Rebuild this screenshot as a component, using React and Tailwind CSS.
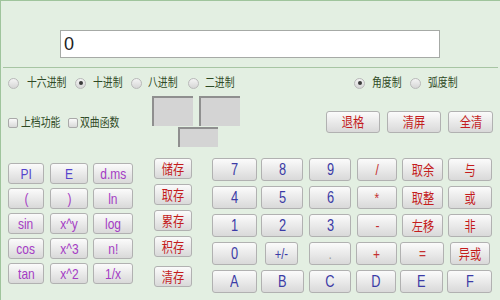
import React from 'react';

// Scientific calculator panel (Chinese UI)
const FONT = { fontFamily: '"Liberation Sans", "Noto Sans CJK SC", sans-serif' };

const Radio = ({ checked, className = '' }) => (
  <span
    className={`flex items-center justify-center w-[11px] h-[11px] rounded-full border border-[#b9b9b9] bg-linear-to-b from-[#f4f4f4] to-[#d6d6d6] shrink-0 ${className}`}
  >
    {checked && <span className="w-[4px] h-[4px] rounded-full bg-[#3a3a3a]" />}
  </span>
);

const Check = ({ className = '' }) => (
  <span
    className={`w-[10px] h-[10px] rounded-[2px] border border-[#a9a9a9] bg-linear-to-b from-[#fafafa] to-[#d9d9d9] shrink-0 ${className}`}
  />
);

// labels are drawn condensed, like the original narrow font
const Label = ({ children, className = '' }) => (
  <span className={`block text-[12px] leading-none text-[#2f4a25] whitespace-nowrap ${className}`}>
    <span className="inline-block origin-left scale-x-[0.82]">{children}</span>
  </span>
);

const Btn = ({ children, className = '' }) => (
  <div
    className={`flex items-center justify-center rounded-[3px] border border-[#b1b1b1] bg-linear-to-b from-[#fbfbfb] to-[#d9d9d9] leading-none shrink-0 ${className}`}
  >
    <span className="inline-block scale-x-[0.8]">{children}</span>
  </div>
);

const BLUE = 'text-[#3b3ba6] text-[16px]';
const RED = 'text-[#c41c1c] text-[14px]';
const OP = 'text-[#c43030] text-[15px]';
const PUR = 'text-[#a43cc4] text-[15px]';
const VIO = 'text-[#5544cc] text-[15px]';

const funcRows = [
  [['PI', VIO], ['E', VIO], ['d.ms', PUR]],
  [['(', PUR], [')', PUR], ['ln', PUR]],
  [['sin', PUR], ['x^y', PUR], ['log', PUR]],
  [['cos', PUR], ['x^3', PUR], ['n!', PUR]],
  [['tan', PUR], ['x^2', PUR], ['1/x', PUR]],
];
const funcCols = ['w-[36px]', 'ml-[6px] w-[38px]', 'ml-[5px] w-[40px]'];

const memRows = [
  ['储存', 'mt-0'],
  ['取存', 'mt-[5px]'],
  ['累存', 'mt-[5px]'],
  ['积存', 'mt-[5px]'],
  ['清存', 'mt-[9px]'],
];

const mainRows = [
  [
    ['7', BLUE, 'w-[45px]'],
    ['8', BLUE, 'ml-[4px] w-[42px]'],
    ['9', BLUE, 'ml-[6px] w-[42px]'],
    ['/', OP, 'ml-[6px] w-[40px]'],
    ['取余', RED, 'ml-[5px] w-[41px]'],
    ['与', RED, 'ml-[5px] w-[44px]'],
  ],
  [
    ['4', BLUE, 'w-[45px]'],
    ['5', BLUE, 'ml-[4px] w-[42px]'],
    ['6', BLUE, 'ml-[6px] w-[42px]'],
    ['*', OP, 'ml-[6px] w-[40px]'],
    ['取整', RED, 'ml-[5px] w-[41px]'],
    ['或', RED, 'ml-[5px] w-[44px]'],
  ],
  [
    ['1', BLUE, 'w-[45px]'],
    ['2', BLUE, 'ml-[4px] w-[42px]'],
    ['3', BLUE, 'ml-[6px] w-[42px]'],
    ['-', OP, 'ml-[6px] w-[40px]'],
    ['左移', RED, 'ml-[5px] w-[41px]'],
    ['非', RED, 'ml-[5px] w-[44px]'],
  ],
  [
    ['0', BLUE, 'w-[45px]'],
    ['+/-', 'text-[#3b3ba6] text-[14px]', 'ml-[8px] w-[33px]'],
    ['.', 'text-[#9a9a9a] text-[15px]', 'ml-[11px] w-[42px]'],
    ['+', OP, 'ml-[5px] w-[41px]'],
    ['=', OP, 'ml-[3px] w-[44px]'],
    ['异或', RED, 'ml-[6px] w-[40px]'],
  ],
  [
    ['A', BLUE, 'w-[45px]'],
    ['B', BLUE, 'ml-[4px] w-[43px]'],
    ['C', BLUE, 'ml-[5px] w-[42px]'],
    ['D', BLUE, 'ml-[5px] w-[40px]'],
    ['E', BLUE, 'ml-[4px] w-[43px]'],
    ['F', BLUE, 'ml-[4px] w-[45px]'],
  ],
];

export default function App() {
  return (
    <div
      style={FONT}
      className="w-[500px] h-[300px] overflow-hidden bg-[#e3efe2] border-l border-t border-[#9fc49c] flex flex-col"
    >
      {/* Display */}
      <div className="pt-[29px] pl-[59px]">
        <div className="w-[380px] h-[28px] bg-white border border-[#a6aaa6] flex items-center pl-[3px] text-[18px] text-[#222]">
          0
        </div>
      </div>
      <div className="mt-[9px] mx-[2px] border-t border-[#a7c5a3]" />

      {/* Number base / angle unit */}
      <div className="mt-[8px] h-[14px] flex items-center">
        <Radio className="ml-[7px]" />
        <Label className="ml-[8px] w-[40px]">十六进制</Label>
        <Radio checked className="ml-[8px]" />
        <Label className="ml-[7px] w-[30px]">十进制</Label>
        <Radio className="ml-[8px]" />
        <Label className="ml-[6px] w-[30px]">八进制</Label>
        <Radio className="ml-[10px]" />
        <Label className="ml-[6px] w-[30px]">二进制</Label>
        <Radio checked className="ml-[119px]" />
        <Label className="ml-[7px] w-[30px]">角度制</Label>
        <Radio className="ml-[8px]" />
        <Label className="ml-[7px] w-[30px]">弧度制</Label>
      </div>

      {/* Options, bracket indicators, edit buttons */}
      <div className="h-[65px] flex items-start">
        <div className="mt-[27px] flex items-center">
          <Check className="ml-[7px]" />
          <Label className="ml-[3px] w-[40px]">上档功能</Label>
          <Check className="ml-[7px]" />
          <Label className="ml-[2px] w-[40px]">双曲函数</Label>
        </div>
        <div className="ml-[32px] mt-[6px] flex flex-col">
          <div className="flex">
            <div className="w-[41px] h-[30px] bg-[#d4d4d4] border-t-2 border-l-2 border-[#8f8f8f]" />
            <div className="ml-[6px] w-[41px] h-[30px] bg-[#d4d4d4] border-t-2 border-l-2 border-[#8f8f8f]" />
          </div>
          <div className="ml-[26px] mt-[1px] w-[40px] h-[20px] bg-[#d4d4d4] border-t-2 border-l-2 border-[#8f8f8f]" />
        </div>
        <div className="ml-[86px] mt-[21px] flex">
          <Btn className={`w-[54px] h-[22px] ${RED}`}>退格</Btn>
          <Btn className={`ml-[7px] w-[54px] h-[22px] ${RED}`}>清屏</Btn>
          <Btn className={`ml-[7px] w-[45px] h-[22px] ${RED}`}>全清</Btn>
        </div>
      </div>

      {/* Keypads */}
      <div className="flex items-start">
        <div className="ml-[7px] mt-[8px] flex flex-col gap-[4px]">
          {funcRows.map((row, i) => (
            <div key={i} className="flex">
              {row.map(([t, c], j) => (
                <Btn key={j} className={`h-[21px] ${funcCols[j]} ${c}`}>
                  {t}
                </Btn>
              ))}
            </div>
          ))}
        </div>

        <div className="ml-[21px] mt-[3px] flex flex-col">
          {memRows.map(([t, m]) => (
            <Btn key={t} className={`w-[38px] h-[21px] ${m} ${RED}`}>
              {t}
            </Btn>
          ))}
        </div>

        <div className="ml-[20px] mt-[3px] flex flex-col gap-[5px]">
          {mainRows.map((row, i) => (
            <div key={i} className="flex">
              {row.map(([t, c, w], j) => (
                <Btn key={j} className={`h-[23px] ${w} ${c}`}>
                  {t}
                </Btn>
              ))}
            </div>
          ))}
        </div>
      </div>
    </div>
  );
}
